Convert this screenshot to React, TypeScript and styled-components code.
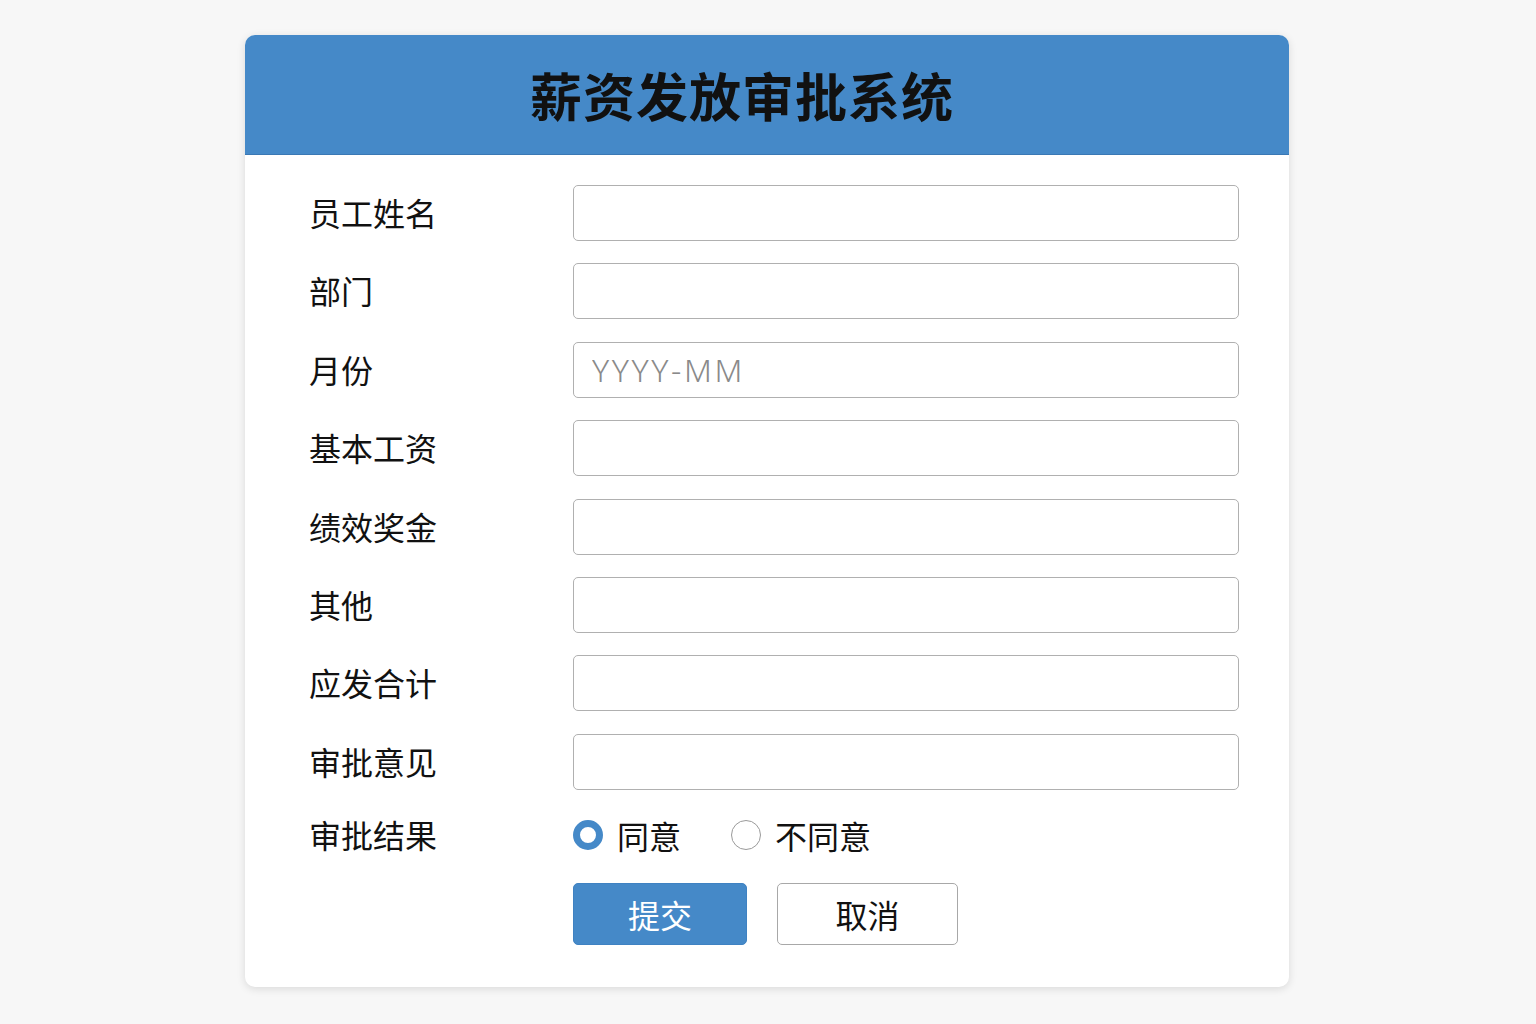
import React, { useState } from "react";
import styled, { createGlobalStyle } from "styled-components";

const Global = createGlobalStyle`
  html, body { margin: 0; padding: 0; background: #f7f7f7; }
  body { font-family: "Noto Sans CJK SC", "Noto Sans", sans-serif; color: #111; }
  * { box-sizing: border-box; }
`;

const Page = styled.div`
  min-height: 1024px;
  display: flex;
  justify-content: center;
  padding: 35px 2px 0 0;
`;

const Card = styled.div`
  width: 1044px;
  height: 952px;
  background: #fff;
  border-radius: 10px;
  box-shadow: 0 2px 8px rgba(0, 0, 0, 0.12);
  overflow: hidden;
  display: flex;
  flex-direction: column;
`;

const Header = styled.div`
  height: 120px;
  background: #4589c8;
  border-bottom: 1px solid #3a78b4;
  display: flex;
  align-items: center;
  justify-content: center;
  padding-right: 50px;
`;

const Title = styled.h1`
  margin: 0;
  font-size: 52px;
  font-weight: 700;
  letter-spacing: 1px;
  color: #111;
  line-height: 1;
`;

const Form = styled.form`
  padding: 30px 50px 0 64px;
  display: grid;
  grid-template-columns: 264px 666px;
  row-gap: 22.4px;
  align-items: center;
`;

const Label = styled.label`
  font-size: 32px;
  color: #111;
  line-height: 1;
  margin-top: -2px;
`;

const Input = styled.input`
  height: 56px;
  width: 100%;
  border: 1.5px solid #b0b0b0;
  border-radius: 5px;
  padding: 0 18px;
  font-family: "Noto Sans", "Noto Sans CJK SC", sans-serif;
  font-size: 32px;
  font-weight: 300;
  letter-spacing: 2.6px;
  color: #333;
  outline: none;
  &::placeholder { color: #8a8a8a; }
`;

const RadioGroup = styled.div`
  height: 46px;
  display: flex;
  align-items: center;
  gap: 50px;
`;

const RadioOption = styled.label`
  display: flex;
  align-items: center;
  gap: 14px;
  font-size: 32px;
  color: #111;
  cursor: pointer;
`;

const RadioDot = styled.span<{ $checked: boolean }>`
  width: 30px;
  height: 30px;
  border-radius: 50%;
  background: #fff;
  border: ${(p) => (p.$checked ? "7px solid #4589c8" : "1.5px solid #9a9a9a")};
`;

const Actions = styled.div`
  grid-column: 2;
  display: flex;
  gap: 30px;
  margin-top: 2px;
`;

const Button = styled.button<{ $primary?: boolean }>`
  height: 62px;
  width: ${(p) => (p.$primary ? "174px" : "181px")};
  border-radius: 5px;
  font-family: "Noto Sans CJK SC", sans-serif;
  font-size: 32px;
  cursor: pointer;
  background: ${(p) => (p.$primary ? "#4589c8" : "#fff")};
  color: ${(p) => (p.$primary ? "#fff" : "#111")};
  border: ${(p) => (p.$primary ? "1px solid #3f82c2" : "1.5px solid #a8a8a8")};
`;

const fields: { label: string; placeholder?: string }[] = [
  { label: "员工姓名" },
  { label: "部门" },
  { label: "月份", placeholder: "YYYY-MM" },
  { label: "基本工资" },
  { label: "绩效奖金" },
  { label: "其他" },
  { label: "应发合计" },
  { label: "审批意见" },
];

export default function App() {
  const [result, setResult] = useState("agree");
  return (
    <>
      <Global />
      <Page>
        <Card>
          <Header>
            <Title>薪资发放审批系统</Title>
          </Header>
          <Form onSubmit={(e) => e.preventDefault()}>
            {fields.map((f) => (
              <React.Fragment key={f.label}>
                <Label>{f.label}</Label>
                <Input placeholder={f.placeholder} />
              </React.Fragment>
            ))}
            <Label>审批结果</Label>
            <RadioGroup>
              <RadioOption onClick={() => setResult("agree")}>
                <RadioDot $checked={result === "agree"} />
                同意
              </RadioOption>
              <RadioOption onClick={() => setResult("disagree")}>
                <RadioDot $checked={result === "disagree"} />
                不同意
              </RadioOption>
            </RadioGroup>
            <Actions>
              <Button $primary type="submit">提交</Button>
              <Button type="button">取消</Button>
            </Actions>
          </Form>
        </Card>
      </Page>
    </>
  );
}
